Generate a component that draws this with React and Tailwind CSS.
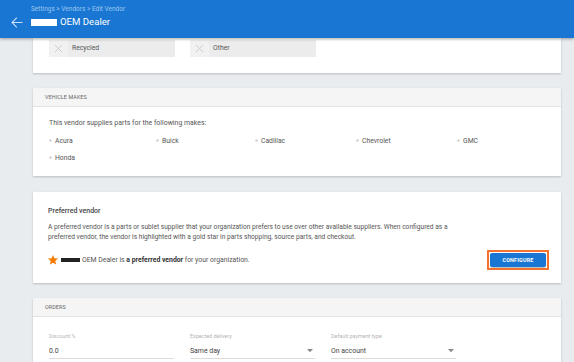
import React from "react";

function Chip({ label }) {
  return (
    <div className="flex h-[17px] w-[126px] bg-[#ececec]">
      <div className="flex h-full w-[19px] items-center justify-center bg-[#f1f1f1]">
        <svg width="9" height="9" viewBox="0 0 10 10">
          <path d="M1 1L9 9M9 1L1 9" stroke="#c4c4c4" strokeWidth="0.9" fill="none" />
        </svg>
      </div>
      <div className="flex items-center pl-[4px] text-[6.8px] text-[#555]">{label}</div>
    </div>
  );
}

function Make({ name }) {
  return (
    <div className="flex h-[17px] items-center text-[6.8px] text-[#555]">
      <svg width="3" height="3" viewBox="0 0 3 3" className="mr-[3px]">
        <circle cx="1.5" cy="1.5" r="1.2" fill="#cfcfcf" />
      </svg>
      <span className="leading-[10px]">{name}</span>
    </div>
  );
}

function Field({ label, value, select }) {
  return (
    <div className="flex w-[125px] flex-col">
      <div className="h-[10px] text-[5.4px] leading-[10px] text-[#b5b5b5]">{label}</div>
      <div className="mt-[5px] box-content flex h-[10px] items-center justify-between border-b border-[#dcdcdc] pb-[2px]">
        <span className="text-[6.9px] leading-[10px] text-[#444]">{value}</span>
        {select && (
          <svg width="6" height="4" viewBox="0 0 6 4" className="mr-[2px]">
            <path d="M0 0H6L3 3.2Z" fill="#8a8a8a" />
          </svg>
        )}
      </div>
    </div>
  );
}

export default function App() {
  return (
    <div className="relative flex h-[362px] w-[574px] flex-col overflow-hidden bg-[#e9ecef] font-['Roboto',sans-serif]">
      <header className="relative z-10 h-[38px] shrink-0 bg-[#1976d2] shadow-[0_1px_3px_rgba(0,0,0,0.35)]">
        <div className="absolute left-[31px] top-[5px] text-[6.5px] leading-[8px] text-[#9cc6f0]">
          Settings &gt; Vendors &gt; Edit Vendor
        </div>
        <div className="absolute left-[11px] top-[16px] flex h-[12px] items-center">
          <svg width="12" height="11" viewBox="0 0 12 11">
            <path d="M11.5 5.5H1M5.8 0.7L1 5.5L5.8 10.3" stroke="#c7def6" strokeWidth="1.1" fill="none" />
          </svg>
          <div className="ml-[8px] h-[7px] w-[26px] bg-white" />
          <span className="ml-[3px] text-[9.6px] leading-[12px] text-white">OEM Dealer</span>
        </div>
      </header>

      <main className="ml-[33px] flex w-[528px] flex-col">
        {/* card 1 (partial) */}
        <section className="flex h-[35px] gap-[15px] bg-white px-[16px] pt-[2px] shadow-[0_1px_2px_rgba(0,0,0,0.2)]">
          <Chip label="Recycled" />
          <Chip label="Other" />
        </section>

        {/* vehicle makes */}
        <section className="mt-[15px] h-[88px] bg-white shadow-[0_1px_2px_rgba(0,0,0,0.2)]">
          <div className="flex h-[19px] items-center border-b border-[#e3e3e3] bg-[#f5f5f5] pl-[12px] text-[5.4px] tracking-[0.1px] text-[#666]">
            VEHICLE MAKES
          </div>
          <div className="pl-[16px] pt-[11px]">
            <div className="text-[6.95px] leading-[10px] text-[#555]">
              This vendor supplies parts for the following makes:
            </div>
            <div className="mt-[4px] grid grid-cols-[107px_99px_101px_101px_1fr]">
              <Make name="Acura" />
              <Make name="Buick" />
              <Make name="Cadillac" />
              <Make name="Chevrolet" />
              <Make name="GMC" />
              <Make name="Honda" />
            </div>
          </div>
        </section>

        {/* preferred vendor */}
        <section className="mt-[16px] h-[91px] bg-white pl-[15px] pr-[12px] shadow-[0_1px_2px_rgba(0,0,0,0.2)]">
          <div className="pt-[14px] text-[7px] font-medium leading-[10px] text-[#444]">Preferred vendor</div>
          <div className="mt-[6px] whitespace-nowrap text-[6.65px] leading-[10px] text-[#555]">
            A preferred vendor is a parts or sublet supplier that your organization prefers to use over other available suppliers. When configured as a
            <br />
            preferred vendor, the vendor is highlighted with a gold star in parts shopping, source parts, and checkout.
          </div>
          <div className="mt-[8px] flex items-center justify-between">
            <div className="flex items-center text-[6.85px] text-[#555]">
              <svg width="10" height="10" viewBox="2 2 20 20" className="mr-[3px]">
                <path d="M12 17.27L18.18 21l-1.64-7.03L22 9.24l-7.19-.61L12 2 9.19 8.63 2 9.24l5.46 4.73L5.82 21z" fill="#f57c00" />
              </svg>
              <span className="mr-[2px] inline-block h-[4px] w-[19px] bg-[#222]" />
              <span>
                OEM Dealer is <b className="font-bold text-[#333]">a preferred vendor</b> for your organization.
              </span>
            </div>
            <div className="border-2 border-[#f2722e] p-[1px]">
              <button className="flex h-[14px] w-[56px] items-center justify-center rounded-[2px] bg-[#1976d2] text-[5.4px] font-bold tracking-[0.2px] text-white shadow-[0_1px_1px_rgba(0,0,0,0.25)]">
                CONFIGURE
              </button>
            </div>
          </div>
        </section>

        {/* orders */}
        <section className="mt-[15px] h-[80px] bg-white shadow-[0_1px_2px_rgba(0,0,0,0.2)]">
          <div className="flex h-[19px] items-center border-b border-[#e3e3e3] bg-[#f5f5f5] pl-[12px] text-[5.4px] tracking-[0.1px] text-[#666]">
            ORDERS
          </div>
          <div className="flex gap-[16px] pl-[16px] pt-[14px]">
            <Field label="Discount %" value="0.0" />
            <Field label="Expected delivery" value="Same day" select />
            <Field label="Default payment type" value="On account" select />
          </div>
        </section>
      </main>
    </div>
  );
}
